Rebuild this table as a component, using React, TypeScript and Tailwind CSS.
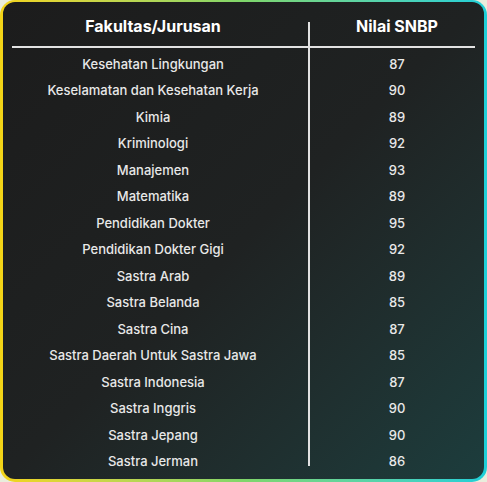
import React from "react";

const rows: [string, number][] = [
  ["Kesehatan Lingkungan", 87],
  ["Keselamatan dan Kesehatan Kerja", 90],
  ["Kimia", 89],
  ["Kriminologi", 92],
  ["Manajemen", 93],
  ["Matematika", 89],
  ["Pendidikan Dokter", 95],
  ["Pendidikan Dokter Gigi", 92],
  ["Sastra Arab", 89],
  ["Sastra Belanda", 85],
  ["Sastra Cina", 87],
  ["Sastra Daerah Untuk Sastra Jawa", 85],
  ["Sastra Indonesia", 87],
  ["Sastra Inggris", 90],
  ["Sastra Jepang", 90],
  ["Sastra Jerman", 86],
];

const App = () => {
  return (
    <div className="w-[487px] h-[482px] bg-[#e9eddc] font-['Inter',sans-serif]">
      <div className="w-full h-full rounded-[15px] bg-linear-to-r from-[#f3d416] via-[#7fd66a] to-[#1ccfd8] pl-[3px] pr-[3px] pt-[2px] pb-[3px]">
        <div className="w-full h-full rounded-[12px] bg-linear-to-br from-[#1c1c1c] via-[#1f2222] to-[#1c3d3d] overflow-hidden">
          {/* header */}
          <div className="flex h-[44px]">
            <div className="w-[306px] pr-[6px] pt-[12px] text-center">
              <span className="text-white text-[16px] leading-6 font-bold">
                Fakultas/Jurusan
              </span>
            </div>
            <div className="flex-1 mt-[20px] border-l-2 border-[#e2e2e2] -ml-[1px]">
              <div className="-mt-[8px] text-center text-white text-[16px] leading-6 font-bold">
                Nilai SNBP
              </div>
            </div>
          </div>
          <div className="mx-[9px] h-[2px] bg-[#e2e2e2]" />

          {/* body */}
          <div className="flex h-[418px]">
            <div className="w-[306px] pr-[6px] pt-[3px] flex flex-col">
              {rows.map(([name]) => (
                <div
                  key={name}
                  className="h-[26.53px] shrink-0 flex items-center justify-center text-[13px] font-medium text-[#e8e8e8]"
                >
                  {name}
                </div>
              ))}
            </div>
            <div className="flex-1 border-l-2 border-[#e2e2e2] -ml-[1px] pt-[3px] flex flex-col">
              {rows.map(([name, score]) => (
                <div
                  key={name}
                  className="h-[26.53px] shrink-0 flex items-center justify-center text-[13px] font-medium text-[#e8e8e8]"
                >
                  {score}
                </div>
              ))}
            </div>
          </div>
        </div>
      </div>
    </div>
  );
};

export default App;
